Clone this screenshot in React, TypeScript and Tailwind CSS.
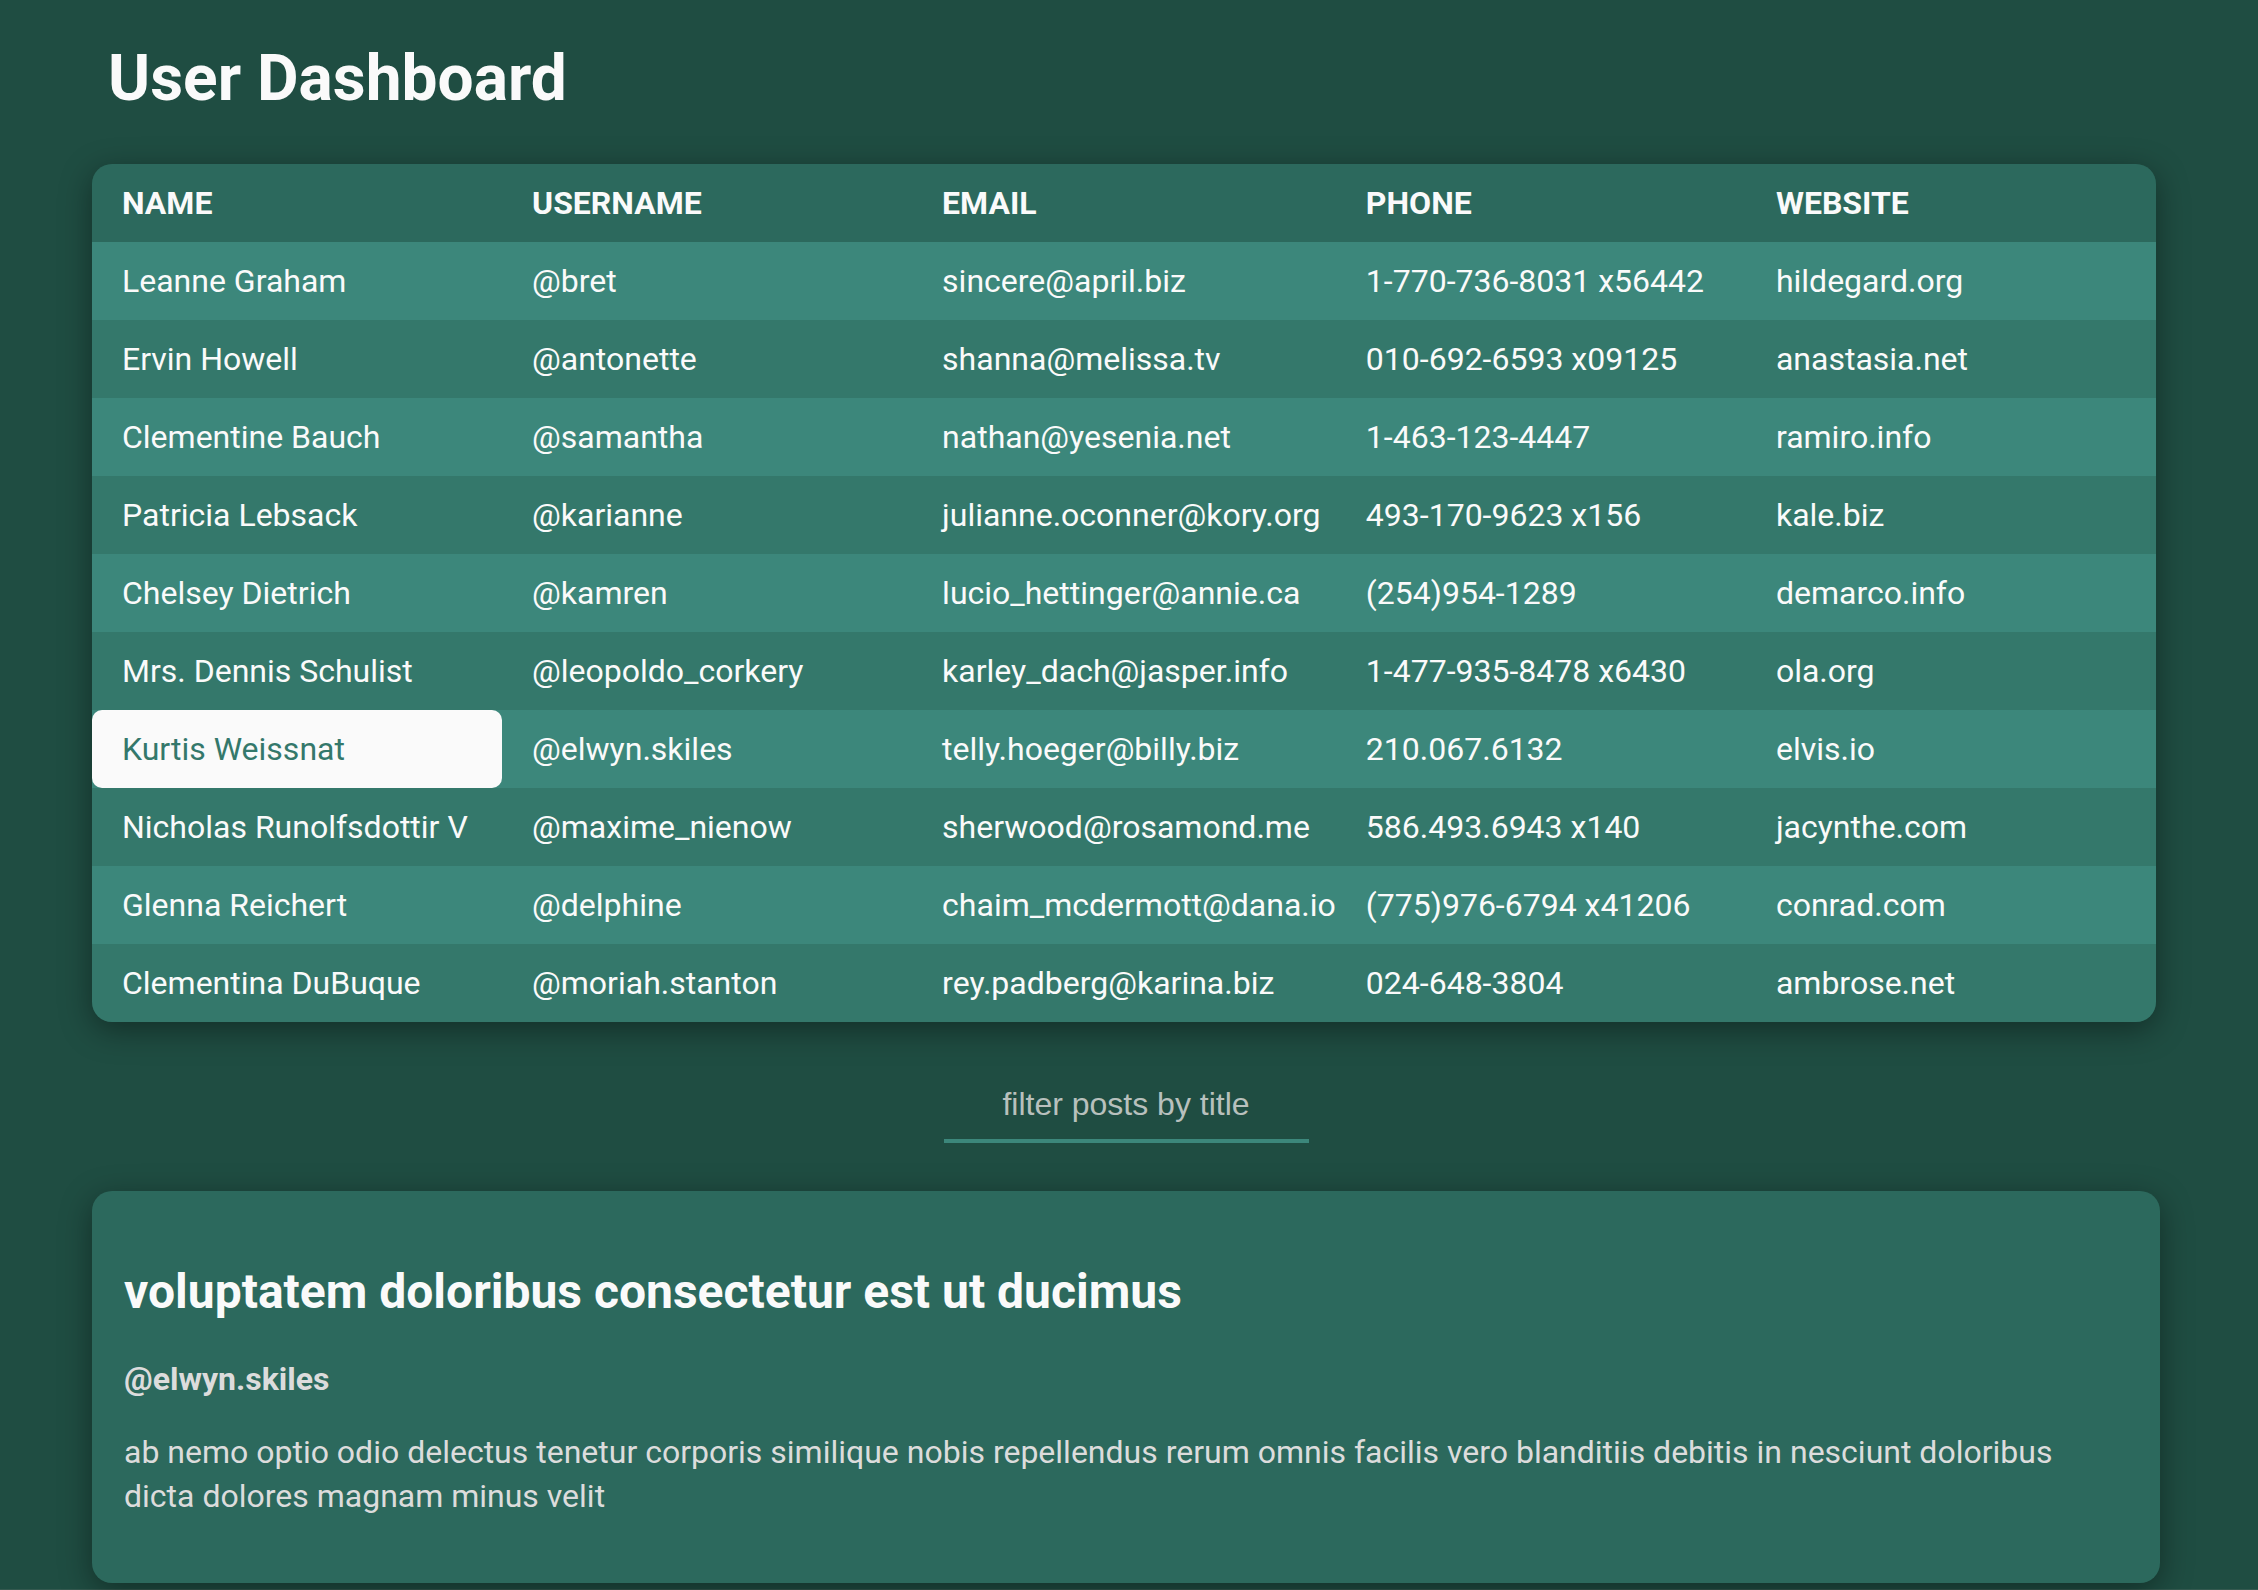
import { useState } from "react";

const users = [
  ["Leanne Graham", "@bret", "sincere@april.biz", "1-770-736-8031 x56442", "hildegard.org"],
  ["Ervin Howell", "@antonette", "shanna@melissa.tv", "010-692-6593 x09125", "anastasia.net"],
  ["Clementine Bauch", "@samantha", "nathan@yesenia.net", "1-463-123-4447", "ramiro.info"],
  ["Patricia Lebsack", "@karianne", "julianne.oconner@kory.org", "493-170-9623 x156", "kale.biz"],
  ["Chelsey Dietrich", "@kamren", "lucio_hettinger@annie.ca", "(254)954-1289", "demarco.info"],
  ["Mrs. Dennis Schulist", "@leopoldo_corkery", "karley_dach@jasper.info", "1-477-935-8478 x6430", "ola.org"],
  ["Kurtis Weissnat", "@elwyn.skiles", "telly.hoeger@billy.biz", "210.067.6132", "elvis.io"],
  ["Nicholas Runolfsdottir V", "@maxime_nienow", "sherwood@rosamond.me", "586.493.6943 x140", "jacynthe.com"],
  ["Glenna Reichert", "@delphine", "chaim_mcdermott@dana.io", "(775)976-6794 x41206", "conrad.com"],
  ["Clementina DuBuque", "@moriah.stanton", "rey.padberg@karina.biz", "024-648-3804", "ambrose.net"],
];

const columns = ["Name", "Username", "Email", "Phone", "Website"];

const posts = [
  {
    title: "voluptatem doloribus consectetur est ut ducimus",
    author: "@elwyn.skiles",
    body: "ab nemo optio odio delectus tenetur corporis similique nobis repellendus rerum omnis facilis vero blanditiis debitis in nesciunt doloribus dicta dolores magnam minus velit",
  },
];

export default function App() {
  const [selected, setSelected] = useState("Kurtis Weissnat");
  const [filter, setFilter] = useState("");

  return (
    <div className="min-h-screen border-b border-[#34594f] bg-[#1f4d42] pl-[92px] pr-[98px] pb-[6px] font-[Roboto,sans-serif] text-[32px] leading-[38px] text-[#fafafa]">
      <h1 className="pl-4 pt-[41px] pb-[47px] text-[64px] leading-[76px] font-bold">User Dashboard</h1>
      <main>
        <div className="mr-1 overflow-hidden rounded-[20px] shadow-[0_8px_32px_rgba(0,0,0,0.4)]">
          <table className="w-full border-collapse text-left">
            <thead>
              <tr className="bg-[#2c695d]">
                {columns.map((c) => (
                  <th key={c} scope="col" className="w-[410px] py-5 pl-[30px] font-bold uppercase">
                    {c}
                  </th>
                ))}
              </tr>
            </thead>
            <tbody>
              {users.map((row) => (
                <tr key={row[0]} className="bg-[#34786b] odd:bg-[#3c877b]">
                  {row.map((cell, i) =>
                    i === 0 ? (
                      <td key={cell} className="p-0">
                        <button
                          type="button"
                          onClick={() => setSelected(cell)}
                          className={
                            cell === selected
                              ? "block w-full cursor-pointer rounded-[10px] bg-[#fafafa] py-5 pl-[30px] text-left text-[#34786b]"
                              : "block w-full cursor-pointer py-5 pl-[30px] text-left"
                          }
                        >
                          {cell}
                        </button>
                      </td>
                    ) : (
                      <td key={cell} className="py-5 pl-[30px]">
                        {cell}
                      </td>
                    ),
                  )}
                </tr>
              ))}
            </tbody>
          </table>
        </div>

        <div className="flex justify-center pt-[54px] pb-12">
          <input
            type="text"
            aria-label="filter posts by title"
            placeholder="filter posts by title"
            value={filter}
            onChange={(e) => setFilter(e.target.value)}
            className="w-[365px] border-b-4 border-[#3c877b] bg-transparent pt-[9px] pb-4 text-center font-['Liberation_Sans',sans-serif] outline-none placeholder:text-[#b8c0bd]"
          />
        </div>

        {posts
          .filter((p) => p.title.includes(filter))
          .map((p) => (
            <article
              key={p.title}
              className="rounded-[20px] bg-[#2c695d] px-8 pt-[73px] pb-[65px] shadow-[0_8px_32px_rgba(0,0,0,0.4)]"
            >
              <h2 className="text-[48px] leading-[56px] font-bold">{p.title}</h2>
              <h3 className="mt-10 font-bold text-[#dcdcdc]">{p.author}</h3>
              <p className="mt-8 leading-[44px] text-[#dcdcdc]">{p.body}</p>
            </article>
          ))}
      </main>
    </div>
  );
}
